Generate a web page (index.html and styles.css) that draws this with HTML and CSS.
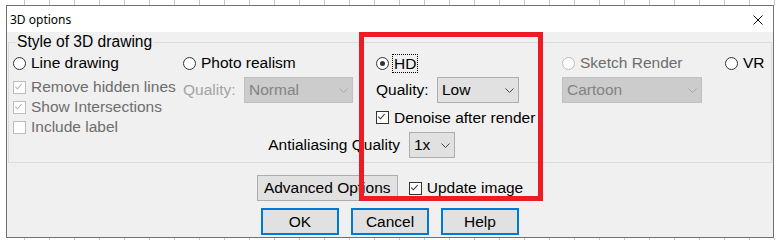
FILE: index.html
```html
<!DOCTYPE html>
<html lang="en">
<head>
    <meta charset="UTF-8">
    <title>3D options</title>
    <link rel="stylesheet" href="styles.css">
</head>
<body>
    <div class="window">
        <div class="titlebar">
            <span class="title">3D options</span>
            <svg class="close" width="10" height="10" viewBox="0 0 10 10"><path d="M0.5 0.5L9.5 9.5M9.5 0.5L0.5 9.5" stroke="#111" stroke-width="1" fill="none"/></svg>
        </div>

        <div class="content">
            <fieldset class="group">
                <legend>Style of 3D drawing</legend>
                <div class="grid">
                    <!-- первая строка: режимы -->
                    <label class="opt"><span class="radio"></span>Line drawing</label>
                    <label class="opt"><span class="radio"></span>Photo realism</label>
                    <label class="opt"><span class="radio on"></span><span class="focus">HD</span></label>
                    <label class="opt disabled"><span class="radio"></span>Sketch Render</label>
                    <label class="opt"><span class="radio"></span>VR</label>

                    <div class="stack">
                        <label class="opt disabled"><span class="check on"><svg viewBox="0 0 13 13"><path d="M2.5 6.5L5 9L10 3.5"/></svg></span>Remove hidden lines</label>
                        <label class="opt disabled"><span class="check on"><svg viewBox="0 0 13 13"><path d="M2.5 6.5L5 9L10 3.5"/></svg></span>Show Intersections</label>
                        <label class="opt disabled"><span class="check"></span>Include label</label>
                    </div>

                    <div class="field photo-q">
                        <span class="q-label muted">Quality:</span>
                        <div class="select disabled w-normal"><span>Normal</span><svg class="chev" viewBox="0 0 9 5"><path d="M0.5 0.5L4.5 4.5L8.5 0.5"/></svg></div>
                    </div>
                    <div class="field hd-q">
                        <span class="q-label">Quality:</span>
                        <div class="select w-low"><span>Low</span><svg class="chev" viewBox="0 0 9 5"><path d="M0.5 0.5L4.5 4.5L8.5 0.5"/></svg></div>
                    </div>
                    <div class="field sketch-q">
                        <div class="select disabled w-cartoon"><span>Cartoon</span><svg class="chev" viewBox="0 0 9 5"><path d="M0.5 0.5L4.5 4.5L8.5 0.5"/></svg></div>
                    </div>

                    <label class="opt denoise"><span class="check on"><svg viewBox="0 0 13 13"><path d="M2.5 6.5L5 9L10 3.5"/></svg></span>Denoise after render</label>

                    <div class="field antialias">
                        <span class="aa-label">Antialiasing Quality</span>
                        <div class="select w-aa"><span>1x</span><svg class="chev" viewBox="0 0 9 5"><path d="M0.5 0.5L4.5 4.5L8.5 0.5"/></svg></div>
                    </div>
                </div>
            </fieldset>

            <div class="extra-row">
                <button class="btn advanced">Advanced Options</button>
                <label class="opt"><span class="check on"><svg viewBox="0 0 13 13"><path d="M2.5 6.5L5 9L10 3.5"/></svg></span>Update image</label>
            </div>

            <div class="button-row">
                <button class="btn primary">OK</button>
                <button class="btn primary">Cancel</button>
                <button class="btn primary">Help</button>
            </div>
        </div>
    </div>

    <!-- красная рамка поверх диалога -->
    <div class="highlight"></div>
</body>
</html>
```

FILE: styles.css
```css
:root {
    --face: #f0f0f0;
    --btn-face: #e1e1e1;
    --btn-border: #adadad;
    --accent: #0078d7;
    --gray-text: #6d6d6d;
    --red: #ed1c24;
}

* {
    box-sizing: border-box;
    margin: 0;
    padding: 0;
}

html, body {
    width: 777px;
    height: 240px;
}

body {
    position: relative;
    overflow: hidden;
    padding: 5px 0 0 6px;
    font-family: 'Liberation Sans', Arial, sans-serif;
    font-size: 15.5px;
    color: #000;
    background:
        repeating-linear-gradient(to right, transparent 0 24px, #c6c6c6 24px 25px) top left / 100% 5px no-repeat,
        repeating-linear-gradient(to right, transparent 0 24px, #c6c6c6 24px 25px) bottom left / 100% 2px no-repeat,
        #fff;
}

.window {
    width: 768px;
    height: 233px;
    border: 1px solid #707070;
    background: var(--face);
    display: flex;
    flex-direction: column;
}

.titlebar {
    height: 26px;
    background: #fff;
    display: flex;
    align-items: center;
    justify-content: space-between;
    padding: 0 10px 0 3px;
}

.title {
    font-family: 'Noto Sans', sans-serif;
    font-size: 12px;
}

.close {
    display: block;
    margin-top: 1px;
}

.content {
    padding: 0 1px;
}

.group {
    margin-top: 1px;
    border: 1px solid #dcdcdc;
    padding: 2px 0 4px 4px;
    min-width: 0;
}

.group legend {
    font-size: 15.6px;
    line-height: 18px;
    margin-left: 3px;
    padding: 0 1px;
}

.grid {
    display: grid;
    grid-template-columns: 170px 193px 186px 163px 1fr;
    grid-template-rows: 20px 26px 21px 26px;
    row-gap: 4px;
}

.opt {
    display: flex;
    align-items: center;
    line-height: 20px;
    white-space: nowrap;
}

.opt.disabled {
    color: var(--gray-text);
}

.radio,
.check {
    flex: none;
    width: 13px;
    height: 13px;
    margin-right: 5px;
    border: 1px solid #333;
    background: #fff;
    position: relative;
}

.radio {
    border-radius: 50%;
}

.radio.on::after {
    content: '';
    position: absolute;
    left: 3px;
    top: 3px;
    width: 5px;
    height: 5px;
    border-radius: 50%;
    background: #333;
}

.check svg {
    display: block;
    width: 11px;
    height: 11px;
    margin: 0;
}

.check svg path {
    fill: none;
    stroke: #333;
    stroke-width: 1.2;
    transform: translate(-1px, -1px);
}

.disabled .radio,
.disabled .check {
    border-color: #bcbcbc;
}

.disabled .check svg path {
    stroke: #b4b4b4;
}

.focus {
    outline: 1px dotted #000;
    outline-offset: 0;
    padding: 0 1px;
    line-height: 17px;
    margin-left: -1px;
}

.stack {
    grid-column: 1;
    grid-row: 2 / 5;
    display: flex;
    flex-direction: column;
}

.field {
    display: flex;
    align-items: center;
}

.photo-q { grid-column: 2; grid-row: 2; }
.hd-q { grid-column: 3; grid-row: 2; }
.sketch-q { grid-column: 4; grid-row: 2; }
.denoise { grid-column: 3; grid-row: 3; }

.antialias {
    grid-column: 2 / 4;
    grid-row: 4;
}

.q-label {
    width: 61px;
}

.muted {
    color: #a3a3a3;
}

.aa-label {
    width: 217px;
    text-align: right;
    margin-right: 9px;
}

.select {
    height: 26px;
    border: 1px solid var(--btn-border);
    background: var(--btn-face);
    display: flex;
    align-items: center;
    justify-content: space-between;
    padding: 0 4px 0 4px;
}

.select .chev {
    width: 9px;
    height: 5px;
    display: block;
}

.select .chev path {
    fill: none;
    stroke: #444;
    stroke-width: 1;
}

.select.disabled {
    background: #cccccc;
    border-color: #bfbfbf;
    color: #838383;
}

.select.disabled .chev path {
    stroke: #a8a8a8;
}

.w-normal { width: 109px; }
.w-low { width: 82px; }
.w-cartoon { width: 140px; }
.w-aa { width: 46px; }

.extra-row {
    margin-top: 12px;
    display: flex;
    justify-content: center;
    align-items: center;
    gap: 11px;
}

.btn {
    font-family: inherit;
    font-size: 15.5px;
    color: #000;
    background: var(--btn-face);
    border: 1px solid var(--btn-border);
    height: 26px;
}

.advanced {
    width: 141px;
}

.button-row {
    margin-top: 7px;
    display: flex;
    justify-content: center;
    gap: 12px;
}

.btn.primary {
    width: 78px;
    height: 27px;
    border: 2px solid var(--accent);
}

.highlight {
    position: absolute;
    left: 359px;
    top: 32px;
    width: 184px;
    height: 169px;
    border: 5px solid var(--red);
}
```
